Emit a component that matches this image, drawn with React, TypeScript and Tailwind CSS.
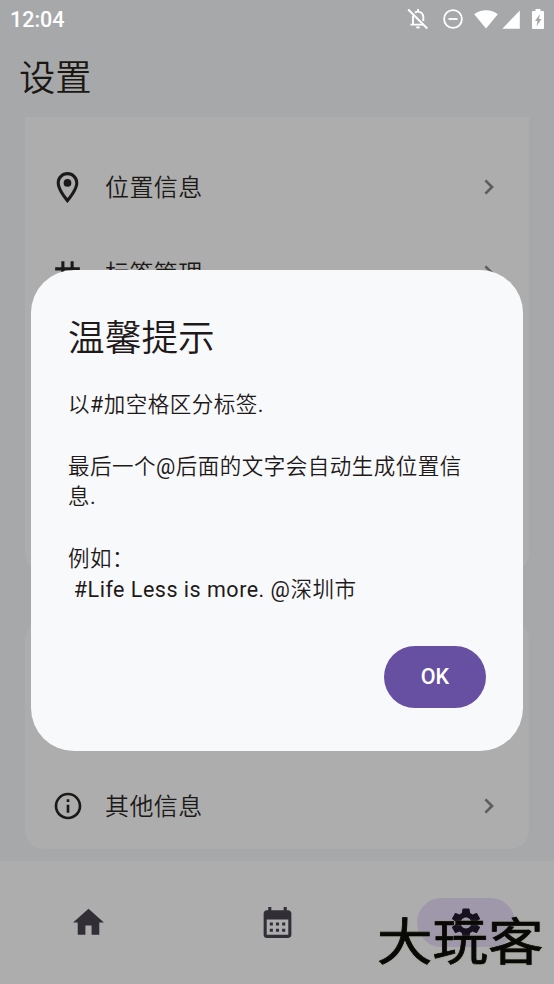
import type { ReactNode } from "react";
import {
  MdCalendarMonth,
  MdHome,
  MdInfoOutline,
  MdOutlineLocationOn,
  MdSettings,
  MdTag,
} from "react-icons/md";

function StatusBar() {
  return (
    <div className="flex h-[38px] shrink-0 items-center justify-between pl-[10px] pr-[10px] text-white">
      <span className="pt-[1px] text-[21.5px] font-medium leading-none">12:04</span>
      <div className="flex items-center">
        {/* Notifications off */}
        <svg width="22" height="22" viewBox="0 0 22 22" fill="none" stroke="currentColor" strokeWidth="1.9" className="mr-[14px]">
          <path d="M1.2 1.5 20.3 20.5" />
          <path d="M8 4.6A5.3 5.3 0 0 1 16.3 8.8V13M6 7.500V16.6H16M3.5 16.6h2.5M11 1v2.500" />
          <path d="M9.3 19.4h3.4" strokeWidth="2" />
        </svg>
        {/* Do not disturb */}
        <svg width="20" height="20" viewBox="0 0 20 20" fill="none" stroke="currentColor" strokeWidth="1.8" className="mr-[11px]">
          <circle cx="10" cy="10" r="8.9" />
          <path d="M5.5 10h9" />
        </svg>
        {/* Wifi */}
        <svg width="24" height="19" viewBox="0 0 24 19" fill="currentColor" className="mr-[4px]">
          <path d="M12 18.6.2 4.2C3.6 1.4 7.6.2 12 .2s8.4 1.2 11.8 4z" />
        </svg>
        {/* Signal */}
        <svg width="18" height="19" viewBox="0 0 18 19" fill="currentColor" className="mr-[12px]">
          <path d="M17.8.5v18.300H.3z" />
        </svg>
        {/* Battery */}
        <svg width="12" height="20" viewBox="0 0 12 20" fill="currentColor">
          <path fillRule="evenodd" d="M3.5 0h5v2H11a1 1 0 0 1 1 1v16a1 1 0 0 1-1 1H1a1 1 0 0 1-1-1V3a1 1 0 0 1 1-1h2.500zM8 5 3 12h2.500L4.500 17.500 9.500 10H7z" />
        </svg>
      </div>
    </div>
  );
}

function SettingRow({ icon, label }: { icon: ReactNode; label: string }) {
  return (
    <div className="flex h-[86px] items-center pl-[23px] pr-[34px] text-[#1c1a18]">
      <span className="flex w-[39px] justify-center">{icon}</span>
      <span className="ml-[18px] flex-1 pt-[2px] text-[24px] font-[350] leading-none tracking-[0.4px]">{label}</span>
      <svg width="11" height="16" viewBox="0 0 11 16" fill="none" stroke="#5d5d5d" strokeWidth="2.7">
        <path d="M1.400 1.400 8 8 1.400 14.600" />
      </svg>
    </div>
  );
}

function BottomNav() {
  return (
    <nav className="flex h-[123px] shrink-0 items-center bg-[#adadad] text-[#312e36]">
      <div className="flex w-[176px] justify-center">
        <MdHome size={37} />
      </div>
      <div className="flex flex-1 justify-center">
        <MdCalendarMonth size={37} />
      </div>
      <div className="flex w-[176px] justify-center">
        <div className="flex h-[49px] w-[98px] items-center justify-center rounded-full bg-[#9f98aa] text-[#16111f]">
          <MdSettings size={36} />
        </div>
      </div>
    </nav>
  );
}

function TipDialog() {
  return (
    <div className="absolute left-[31px] top-[270px] flex h-[481px] w-[492px] flex-col rounded-[43px] bg-[#f8f9fb] px-[37px] pt-[46px] text-[#1f1a1a]">
      <h2 className="text-[36.7px] font-[350] leading-[46px]">温馨提示</h2>
      <div className="mt-[28px] whitespace-pre-wrap font-[Roboto,'Noto_Sans_CJK_SC_DemiLight','Noto_Sans_CJK_SC',sans-serif] text-[21.5px] leading-[30.8px] tracking-[0.5px]">
        {"以#加空格区分标签.\n\n最后一个@后面的文字会自动生成位置信息.\n\n例如：\n #Life Less is more. @深圳市"}
      </div>
      <button className="mt-[40px] h-[62px] w-[102px] self-end rounded-full bg-[#674fa2] pt-[2px] text-[21.5px] font-medium text-white">
        OK
      </button>
    </div>
  );
}

export default function App() {
  return (
    <div className="relative flex h-[984px] w-[554px] flex-col overflow-hidden bg-[#a7a8aa] font-[Roboto,'Noto_Sans_CJK_SC',sans-serif]">
      <StatusBar />
      <h1 className="flex h-[79px] shrink-0 items-center pl-[19px] pt-[3px] text-[36.3px] font-[350] leading-none text-[#1a1612]">设置</h1>
      <main className="flex flex-1 flex-col gap-[49px] px-[25px] pb-[12px]">
        <section className="h-[455px] rounded-b-[19px] bg-[#adadad] pt-[27px]">
          <SettingRow icon={<MdOutlineLocationOn size={37} />} label="位置信息" />
          <SettingRow icon={<MdTag size={37} />} label="标签管理" />
        </section>
        <section className="flex flex-1 flex-col justify-end rounded-[19px] bg-[#adadad]">
          <SettingRow icon={<MdInfoOutline size={32} />} label="其他信息" />
        </section>
      </main>
      <BottomNav />
      <TipDialog />
      <div className="absolute left-[377px] top-[914px] origin-center scale-y-[0.9] text-[55.5px] leading-[60px] text-[#080806] [-webkit-text-stroke:0.8px_#080806] [text-shadow:0_0_2px_#8d865c]">
        大玩客
      </div>
    </div>
  );
}
